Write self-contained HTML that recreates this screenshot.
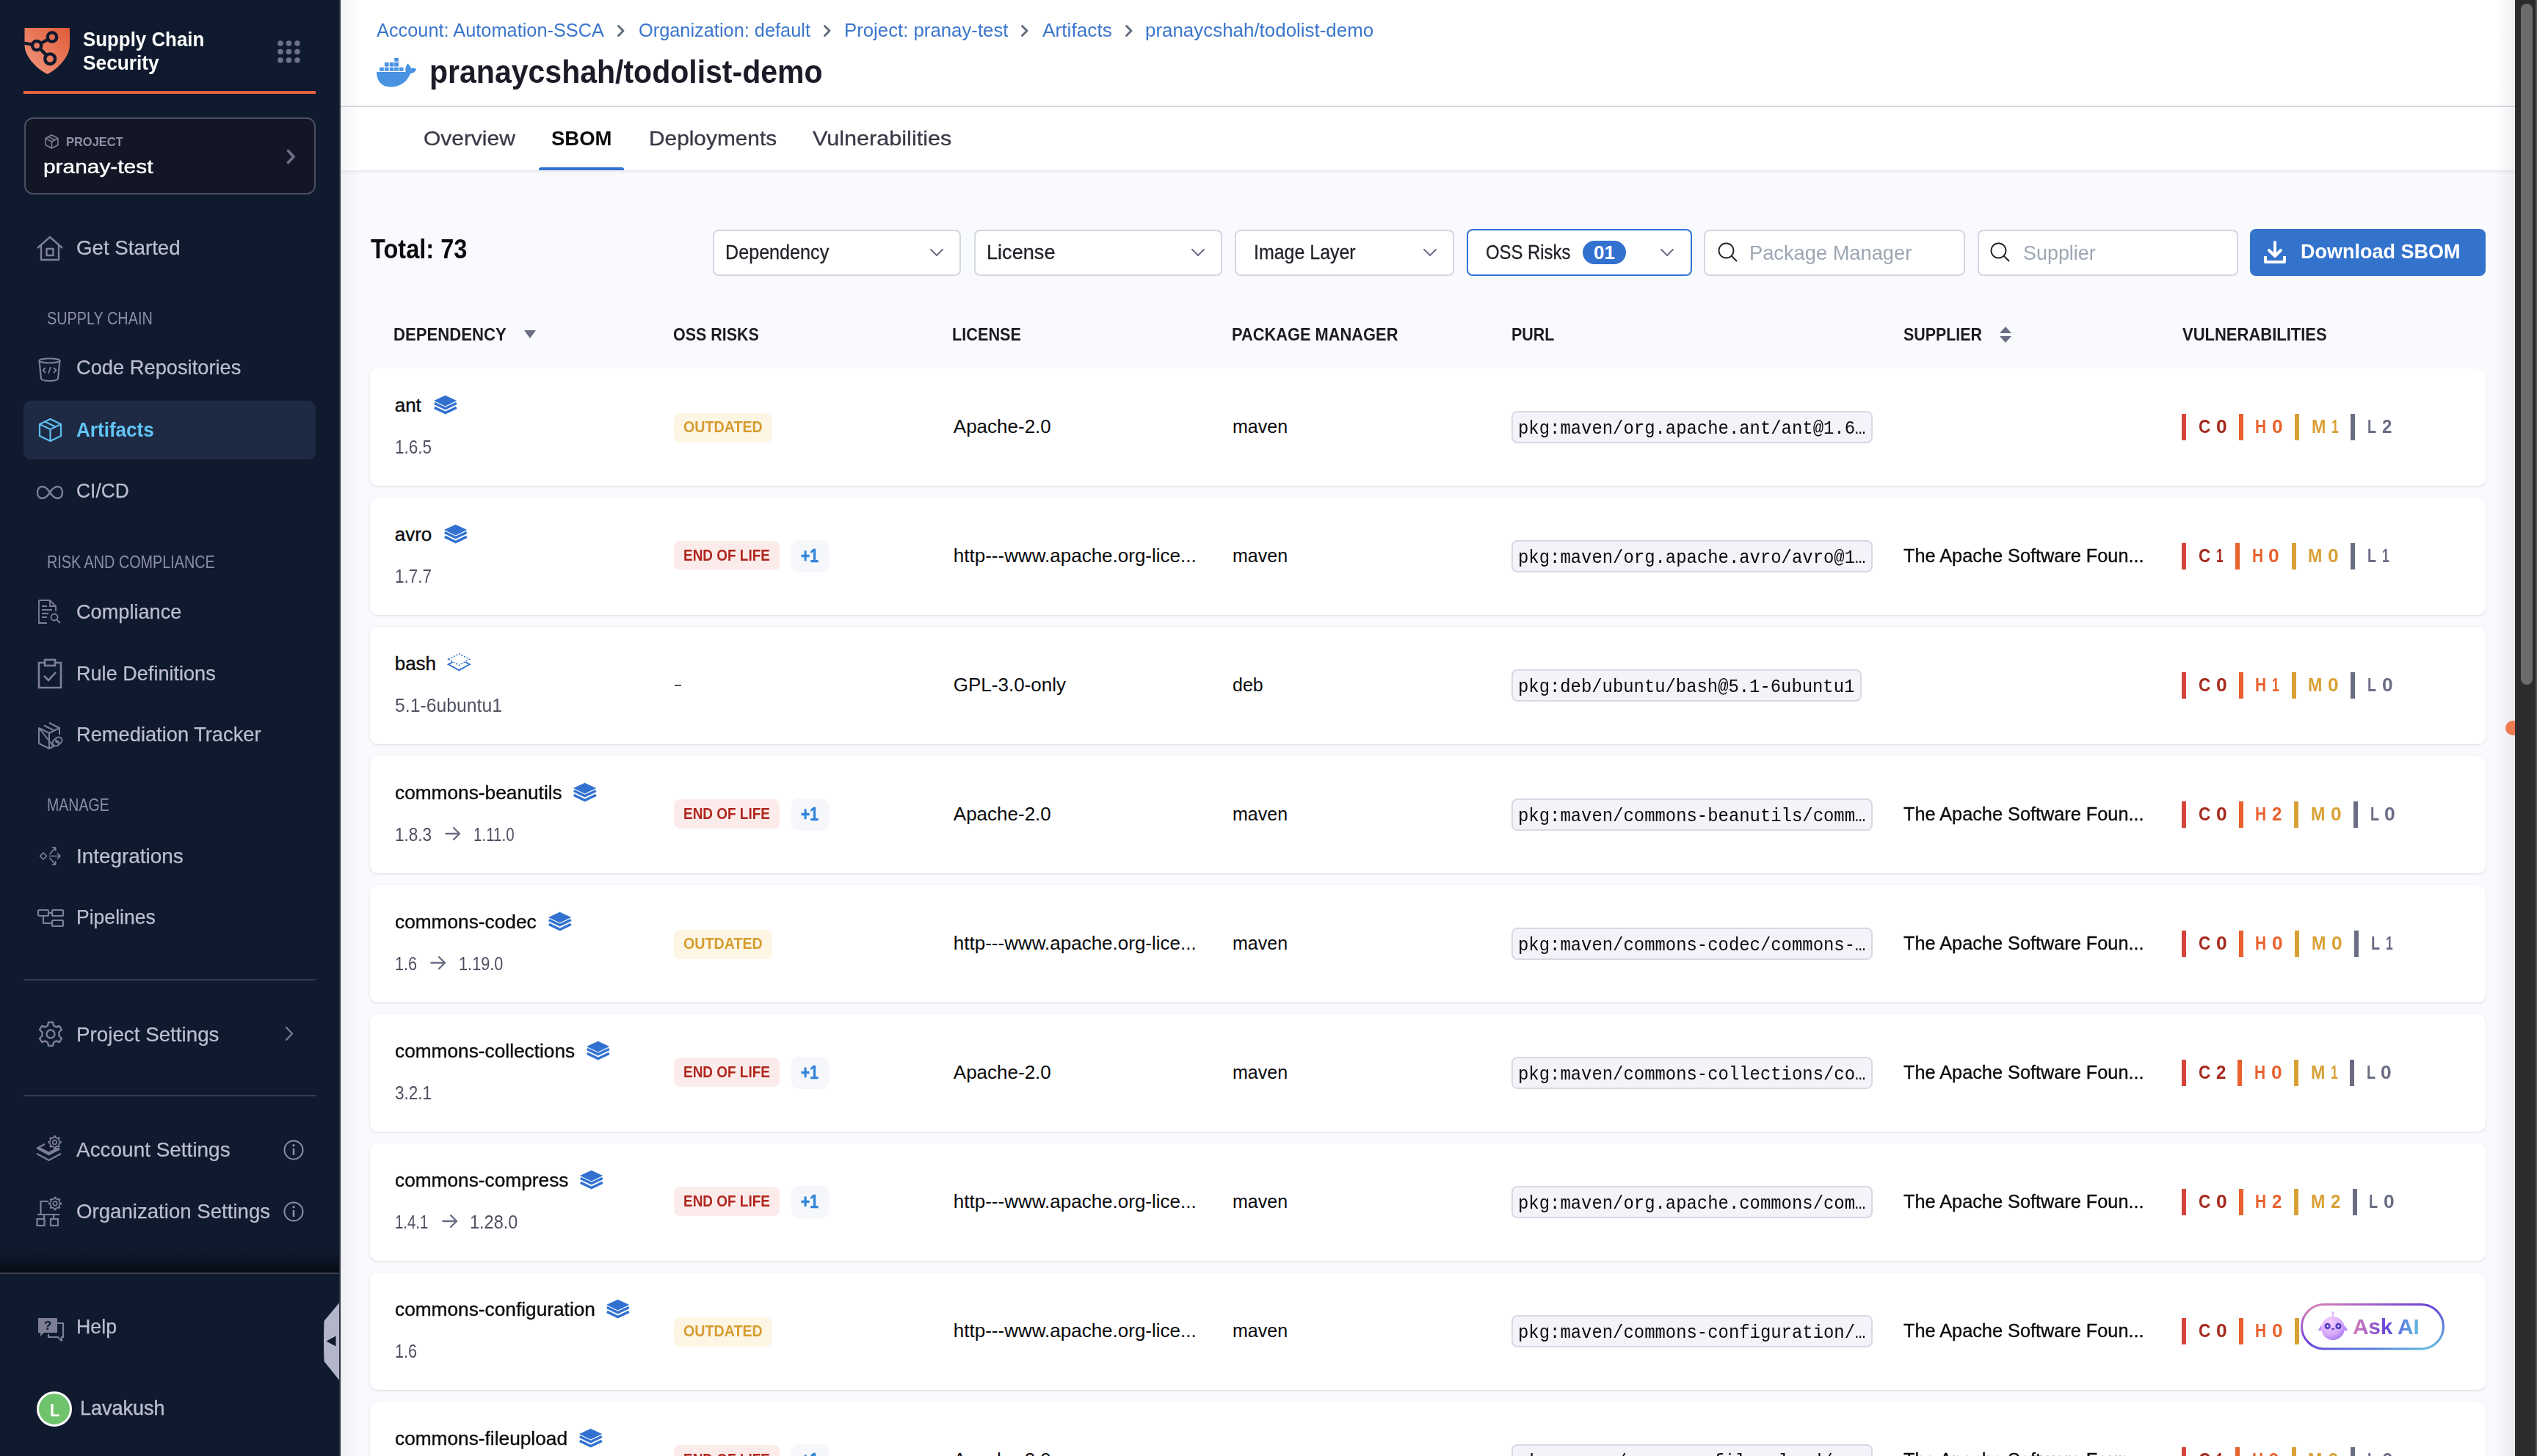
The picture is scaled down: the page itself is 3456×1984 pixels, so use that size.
<!DOCTYPE html>
<html><head><meta charset="utf-8"><style>
html,body{margin:0;padding:0;width:3456px;height:1984px;overflow:hidden;background:#f9fafd;}
.t{position:absolute;white-space:nowrap;}
.b{position:absolute;}
svg.b{overflow:visible;}
@media (max-width: 1800px) { html { zoom: 0.5; } }
</style></head><body>
<div class="b" style="left:0px;top:0px;width:464px;height:1984px;background:#0f1a2e;"></div><svg class="b" style="left:24px;top:30px;" width="80" height="80" viewBox="0 0 80 80">
<defs><linearGradient id="lg" x1="0" y1="1" x2="1" y2="0">
<stop offset="0" stop-color="#f29a80"/><stop offset="1" stop-color="#e05a38"/></linearGradient></defs>
<path d="M10 8 L70 8 Q71 8 71 9.5 L71 31 C71 47 56 63 40.5 71 C25 63 9.5 47 9.5 31 L9.5 9.5 Q9.5 8 10 8 Z" fill="url(#lg)"/>
<g fill="none" stroke="#0f1a2e" stroke-width="4.4">
<circle cx="47" cy="20.6" r="6.2"/><circle cx="26.1" cy="32.1" r="6.1"/><circle cx="44.2" cy="50.3" r="6.9"/>
<path d="M31.5 29.2 L41.5 23.6 M30.6 36.4 L39.4 45.4 M8 28.6 L20 30.6"/></g>
</svg><div class="t " style="left:112.5px;top:35.8px;font:700 28px/36px 'Liberation Sans', sans-serif;color:#ffffff;transform:scaleX(0.9240);transform-origin:0 0;">Supply Chain</div><div class="t " style="left:112.5px;top:67.5px;font:700 28px/36px 'Liberation Sans', sans-serif;color:#ffffff;transform:scaleX(0.9387);transform-origin:0 0;">Security</div><svg class="b" style="left:378px;top:55px;" width="32" height="32" viewBox="0 0 32 32"><circle cx="4.0" cy="4.0" r="3.8" fill="#6f7189"/><circle cx="4.0" cy="15.5" r="3.8" fill="#6f7189"/><circle cx="4.0" cy="27.0" r="3.8" fill="#6f7189"/><circle cx="15.5" cy="4.0" r="3.8" fill="#6f7189"/><circle cx="15.5" cy="15.5" r="3.8" fill="#6f7189"/><circle cx="15.5" cy="27.0" r="3.8" fill="#6f7189"/><circle cx="27.0" cy="4.0" r="3.8" fill="#6f7189"/><circle cx="27.0" cy="15.5" r="3.8" fill="#6f7189"/><circle cx="27.0" cy="27.0" r="3.8" fill="#6f7189"/></svg><div class="b" style="left:32px;top:124px;width:398px;height:4px;background:#e5613f;"></div><div class="b" style="left:33px;top:160px;width:397px;height:105px;background:#131725;border:2px solid #4b4e63;border-radius:12px;box-sizing:border-box;"></div><svg class="b" style="left:60px;top:182px;" width="22" height="22" viewBox="0 0 22 22"><g fill="none" stroke="#7e8097" stroke-width="1.6" stroke-linejoin="round"><path d="M10.5 2 L19 6.5 L19 15.5 L10.5 20 L2 15.5 L2 6.5 Z M2 6.5 L10.5 11 L19 6.5 M10.5 11 L10.5 20 M6 4.3 L14.5 8.8"/></g></svg><div class="t " style="left:90.4px;top:182.6px;font:700 17px/22px 'Liberation Sans', sans-serif;color:#8f91a8;transform:scaleX(0.9679);transform-origin:0 0;">PROJECT</div><div class="t " style="left:58.7px;top:209.6px;font:400 26px/34px 'Liberation Sans', sans-serif;color:#ffffff;transform:scaleX(1.1489);transform-origin:0 0;-webkit-text-stroke:0.4px currentColor;">pranay-test</div><svg class="b" style="left:388px;top:202px;" width="16" height="24" viewBox="0 0 16 24"><path d="M4.5 3.5 L12 11.5 L4.5 19.5" fill="none" stroke="#6f7189" stroke-width="3.6" stroke-linecap="round" stroke-linejoin="round"/></svg><svg class="b" style="left:49px;top:321px;" width="40" height="36" viewBox="0 0 40 36"><g fill="none" stroke="#7d7f96" stroke-width="2.4" stroke-linejoin="round"><path d="M2 17 L19 2 L36 17 M7 13 L7 33 L31 33 L31 13"/><rect x="14.5" y="18" width="9" height="9"/></g></svg><div class="t " style="left:104.3px;top:320.3px;font:400 28px/36px 'Liberation Sans', sans-serif;color:#bcbed1;transform:scaleX(0.9895);transform-origin:0 0;-webkit-text-stroke:0.25px currentColor;">Get Started</div><div class="t " style="left:64.3px;top:419.0px;font:400 23px/30px 'Liberation Sans', sans-serif;color:#8c8ea5;transform:scaleX(0.8629);transform-origin:0 0;">SUPPLY CHAIN</div><svg class="b" style="left:51px;top:487px;" width="34" height="34" viewBox="0 0 34 34"><g fill="none" stroke="#7d7f96" stroke-width="2.2"><ellipse cx="16.5" cy="4.5" rx="14" ry="3"/><path d="M2.5 4.5 L5 29 Q6 32 16.5 32 Q27 32 28 29 L30.5 4.5"/><path d="M11 14 L7.5 17.5 L11 21 M22 14 L25.5 17.5 L22 21 M18 13 L15 22" stroke-width="1.8"/></g></svg><div class="t " style="left:104.3px;top:483.3px;font:400 28px/36px 'Liberation Sans', sans-serif;color:#bcbed1;transform:scaleX(0.9739);transform-origin:0 0;-webkit-text-stroke:0.25px currentColor;">Code Repositories</div><div class="b" style="left:32px;top:546px;width:398px;height:80px;background:#1e2a43;border-radius:10px;"></div><svg class="b" style="left:52px;top:569px;" width="34" height="34" viewBox="0 0 34 34"><g fill="none" stroke="#5cbdf0" stroke-width="2.2" stroke-linejoin="round"><path d="M16.5 2 L31 9 L31 25 L16.5 32 L2 25 L2 9 Z M2 9 L16.5 16 L31 9 M16.5 16 L16.5 32 M9 5.5 L23.5 12.5"/></g></svg><div class="t " style="left:104.3px;top:568.3px;font:700 28px/36px 'Liberation Sans', sans-serif;color:#60c4f5;transform:scaleX(0.9316);transform-origin:0 0;">Artifacts</div><svg class="b" style="left:49px;top:661px;" width="38" height="20" viewBox="0 0 38 20"><path d="M19 10 C15.5 4.5, 12 2, 8.5 2 C4.5 2, 2 5.5, 2 10 C2 14.5, 4.5 18, 8.5 18 C12 18, 15.5 15.5, 19 10 C22.5 4.5, 26 2, 29.5 2 C33.5 2, 36 5.5, 36 10 C36 14.5, 33.5 18, 29.5 18 C26 18, 22.5 15.5, 19 10 Z" fill="none" stroke="#7d7f96" stroke-width="2.4"/></svg><div class="t " style="left:104.3px;top:651.3px;font:400 28px/36px 'Liberation Sans', sans-serif;color:#bcbed1;transform:scaleX(0.9421);transform-origin:0 0;-webkit-text-stroke:0.25px currentColor;">CI/CD</div><div class="t " style="left:64.3px;top:751.0px;font:400 23px/30px 'Liberation Sans', sans-serif;color:#8c8ea5;transform:scaleX(0.8605);transform-origin:0 0;">RISK AND COMPLIANCE</div><svg class="b" style="left:51px;top:816px;" width="34" height="36" viewBox="0 0 34 36"><g fill="none" stroke="#7d7f96" stroke-width="1.8"><path d="M2 2 L17 2 L25 10 L25 17 M13 33 L2 33 L2 2 M17 2 L17 10 L25 10"/><path d="M6 10 L13 10 M6 15 L20 15 M6 20 L15 20 M6 25 L13 25"/><circle cx="23" cy="25" r="4.5"/><path d="M26.5 28.5 L31 33"/></g></svg><div class="t " style="left:104.3px;top:816.3px;font:400 28px/36px 'Liberation Sans', sans-serif;color:#bcbed1;transform:scaleX(0.9696);transform-origin:0 0;-webkit-text-stroke:0.25px currentColor;">Compliance</div><svg class="b" style="left:51px;top:897px;" width="34" height="42" viewBox="0 0 34 42"><g fill="none" stroke="#7d7f96" stroke-width="2.6"><path d="M10 6 L2 6 L2 40 L32 40 L32 6 L24 6"/><rect x="10" y="2" width="14" height="8"/><path d="M9 24 L15 30 L25 19"/></g></svg><div class="t " style="left:104.3px;top:900.3px;font:400 28px/36px 'Liberation Sans', sans-serif;color:#bcbed1;transform:scaleX(0.9673);transform-origin:0 0;-webkit-text-stroke:0.25px currentColor;">Rule Definitions</div><svg class="b" style="left:51px;top:983px;" width="36" height="38" viewBox="0 0 36 38"><g fill="none" stroke="#7d7f96" stroke-width="2" stroke-linejoin="round"><path d="M16 2 L30 9 L30 18 M22 34 L16 37 L2 30 L2 9 Z M2 9 L16 16 L30 9 M16 16 L16 37 M9 5.5 L23 12.5"/><rect x="20" y="23" width="14" height="9" rx="4.5" transform="rotate(-40 27 27.5)"/><circle cx="26" cy="27" r="1" fill="#7d7f96"/><circle cx="28" cy="28.5" r="1" fill="#7d7f96"/></g></svg><div class="t " style="left:104.3px;top:983.3px;font:400 28px/36px 'Liberation Sans', sans-serif;color:#bcbed1;transform:scaleX(0.9736);transform-origin:0 0;-webkit-text-stroke:0.25px currentColor;">Remediation Tracker</div><div class="t " style="left:64.3px;top:1082.0px;font:400 23px/30px 'Liberation Sans', sans-serif;color:#8c8ea5;transform:scaleX(0.8500);transform-origin:0 0;">MANAGE</div><svg class="b" style="left:53px;top:1151px;" width="32" height="32" viewBox="0 0 32 32"><g fill="none" stroke="#7d7f96" stroke-width="1.7" stroke-linecap="round" stroke-linejoin="round"><path d="M1.5 15.5 L6 11 L10.5 15.5 L6 20 Z"/><path d="M14.5 15.5 L29 15.5 M25.5 12 L29 15.5 L25.5 19 M15 12.5 L22.5 4 M18.5 3.5 L22.5 4 L22.8 8 M15 18.5 L22.5 27 M18.5 27.5 L22.5 27 L22.8 23"/></g></svg><div class="t " style="left:104.3px;top:1149.3px;font:400 28px/36px 'Liberation Sans', sans-serif;color:#bcbed1;transform:scaleX(0.9959);transform-origin:0 0;-webkit-text-stroke:0.25px currentColor;">Integrations</div><svg class="b" style="left:50px;top:1238px;" width="38" height="26" viewBox="0 0 38 26"><g fill="none" stroke="#7d7f96" stroke-width="2.2"><rect x="2" y="2" width="14" height="8" rx="1.5"/><rect x="21" y="2" width="15" height="8" rx="1.5"/><rect x="21" y="16" width="15" height="8" rx="1.5"/><path d="M9 10 L9 20 L21 20 M16 6 L21 6"/></g></svg><div class="t " style="left:104.3px;top:1232.3px;font:400 28px/36px 'Liberation Sans', sans-serif;color:#bcbed1;transform:scaleX(0.9482);transform-origin:0 0;-webkit-text-stroke:0.25px currentColor;">Pipelines</div><div class="b" style="left:32px;top:1334px;width:398px;height:2px;background:#363b50;"></div><svg class="b" style="left:51px;top:1391px;" width="36" height="36" viewBox="0 0 36 36"><g fill="none" stroke="#7d7f96" stroke-width="2.4" stroke-linejoin="round"><path d="M15 2 L21 2 L22 6.5 L25.5 8.5 L30 7 L33 12 L29.5 15.5 L29.5 20.5 L33 24 L30 29 L25.5 27.5 L22 29.5 L21 34 L15 34 L14 29.5 L10.5 27.5 L6 29 L3 24 L6.5 20.5 L6.5 15.5 L3 12 L6 7 L10.5 8.5 L14 6.5 Z"/><circle cx="18" cy="18" r="5.5"/></g></svg><div class="t " style="left:104.3px;top:1392.3px;font:400 28px/36px 'Liberation Sans', sans-serif;color:#bcbed1;transform:scaleX(0.9918);transform-origin:0 0;-webkit-text-stroke:0.25px currentColor;">Project Settings</div><svg class="b" style="left:386px;top:1398px;" width="16" height="22" viewBox="0 0 16 22"><path d="M4 2 L12 10.5 L4 19" fill="none" stroke="#7d7f96" stroke-width="2.2" stroke-linecap="round" stroke-linejoin="round"/></svg><div class="b" style="left:32px;top:1492px;width:398px;height:2px;background:#363b50;"></div><svg class="b" style="left:48px;top:1546px;" width="40" height="42" viewBox="0 0 40 42"><g fill="none" stroke="#7d7f96" stroke-width="2" stroke-linejoin="round"><path d="M33.02,9.47 L34.87,9.84 L34.87,11.16 L33.02,11.53 L31.84,14.38 L32.89,15.96 L31.96,16.89 L30.38,15.84 L27.53,17.02 L27.16,18.87 L25.84,18.87 L25.47,17.02 L22.62,15.84 L21.04,16.89 L20.11,15.96 L21.16,14.38 L19.98,11.53 L18.13,11.16 L18.13,9.84 L19.98,9.47 L21.16,6.62 L20.11,5.04 L21.04,4.11 L22.62,5.16 L25.47,3.98 L25.84,2.13 L27.16,2.13 L27.53,3.98 L30.38,5.16 L31.96,4.11 L32.89,5.04 L31.84,6.62 Z" stroke-width="1.7"/><circle cx="26.5" cy="10.5" r="2.8" stroke-width="1.7"/><path d="M13 13 L2 19"/><path d="M2 26 L18.5 35 L35 26"/></g><path d="M2 19.5 L18.5 28.5 L35 20 L30 17.5 L18.5 23.5 L6 17 Z" fill="#7d7f96"/></svg><div class="t " style="left:104.3px;top:1549.3px;font:400 28px/36px 'Liberation Sans', sans-serif;color:#bcbed1;transform:scaleX(0.9976);transform-origin:0 0;-webkit-text-stroke:0.25px currentColor;">Account Settings</div><svg class="b" style="left:385px;top:1552px;" width="30" height="30" viewBox="0 0 30 30"><g fill="none" stroke="#8c8ea5" stroke-width="2"><circle cx="15" cy="15" r="12.5"/><path d="M15 13 L15 22" stroke-width="2.6"/></g><circle cx="15" cy="8.8" r="1.7" fill="#8c8ea5"/></svg><svg class="b" style="left:48px;top:1630px;" width="40" height="42" viewBox="0 0 40 42"><g fill="none" stroke="#7d7f96" stroke-width="2.2"><path d="M33.52,8.97 L35.37,9.34 L35.37,10.66 L33.52,11.03 L32.34,13.88 L33.39,15.46 L32.46,16.39 L30.88,15.34 L28.03,16.52 L27.66,18.37 L26.34,18.37 L25.97,16.52 L23.12,15.34 L21.54,16.39 L20.61,15.46 L21.66,13.88 L20.48,11.03 L18.63,10.66 L18.63,9.34 L20.48,8.97 L21.66,6.12 L20.61,4.54 L21.54,3.61 L23.12,4.66 L25.97,3.48 L26.34,1.63 L27.66,1.63 L28.03,3.48 L30.88,4.66 L32.46,3.61 L33.39,4.54 L32.34,6.12 Z" stroke-width="1.7"/><circle cx="27" cy="10" r="2.8" stroke-width="1.7"/><path d="M18 7 L7.5 7 L7.5 19 M7.5 19 L7.5 25 M3 25 L33 25 M12 25 L12 31 M25 25 L25 31"/><rect x="2.5" y="31" width="10" height="9"/><rect x="21" y="31" width="10" height="9"/></g></svg><div class="t " style="left:104.3px;top:1633.3px;font:400 28px/36px 'Liberation Sans', sans-serif;color:#bcbed1;transform:scaleX(0.9866);transform-origin:0 0;-webkit-text-stroke:0.25px currentColor;">Organization Settings</div><svg class="b" style="left:385px;top:1636px;" width="30" height="30" viewBox="0 0 30 30"><g fill="none" stroke="#8c8ea5" stroke-width="2"><circle cx="15" cy="15" r="12.5"/><path d="M15 13 L15 22" stroke-width="2.6"/></g><circle cx="15" cy="8.8" r="1.7" fill="#8c8ea5"/></svg><div class="b" style="left:0px;top:1706px;width:462px;height:28px;background:linear-gradient(to bottom, rgba(5,8,15,0) 0%, rgba(5,8,15,0.35) 50%, rgba(5,8,15,0.85) 100%);"></div><div class="b" style="left:0px;top:1734px;width:462px;height:2px;background:#3d404f;"></div><svg class="b" style="left:50px;top:1794px;" width="40" height="36" viewBox="0 0 40 36"><g fill="none" stroke="#7d7f96" stroke-width="2.2" stroke-linejoin="round"><path d="M10 9 L36 9 L36 28 L34 28 L34 33 L29 28 L16 28 L16 24"/></g><path d="M2 2 L28 2 L28 22 L10 22 L5 27 L5 22 L2 22 Z" fill="#7d7f96"/><text x="15" y="18" font-family="Liberation Sans" font-weight="700" font-size="17" fill="#0f1a2e" text-anchor="middle">?</text></svg><div class="t " style="left:104.3px;top:1790.3px;font:400 28px/36px 'Liberation Sans', sans-serif;color:#bcbed1;transform:scaleX(0.9552);transform-origin:0 0;-webkit-text-stroke:0.25px currentColor;">Help</div><div class="b" style="left:50px;top:1896px;width:48px;height:48px;border-radius:50%;background:#6fc36c;border:3px solid #ffffff;box-sizing:border-box;"></div><div class="t " style="left:67.5px;top:1907.0px;font:700 23px/30px 'Liberation Sans', sans-serif;color:#ffffff;transform:scaleX(0.9286);transform-origin:0 0;">L</div><div class="t " style="left:109.0px;top:1901.3px;font:400 28px/36px 'Liberation Sans', sans-serif;color:#b9bbcf;transform:scaleX(0.9625);transform-origin:0 0;-webkit-text-stroke:0.5px currentColor;">Lavakush</div><svg class="b" style="left:440px;top:1772px;" width="24" height="112" viewBox="0 0 24 112"><path d="M24 1 L24 111 L1.5 83 Q0.5 55 1.5 28 Z" fill="#b3b5ca"/><path d="M4.5 55.6 L17.5 48.6 L17.5 62.6 Z" fill="#0f1a2e"/></svg><div class="b" style="left:462px;top:0px;width:2px;height:1984px;background:#2f3340;"></div><div class="b" style="left:464px;top:0px;width:2962px;height:144px;background:#ffffff;"></div><div class="b" style="left:464px;top:144px;width:2962px;height:2px;background:#d9dae6;"></div><div class="b" style="left:464px;top:146px;width:2962px;height:86px;background:#ffffff;box-shadow:0 2px 4px rgba(96,97,112,0.12);"></div><div class="t " style="left:513.0px;top:24.0px;font:400 26px/34px 'Liberation Sans', sans-serif;color:#3b76cc;transform:scaleX(0.9749);transform-origin:0 0;">Account: Automation-SSCA</div><svg class="b" style="left:839px;top:33px;" width="14" height="18" viewBox="0 0 14 18"><path d="M3.5 2.5 L10 9 L3.5 15.5" fill="none" stroke="#5f6b7b" stroke-width="2.9" stroke-linecap="round" stroke-linejoin="round"/></svg><div class="t " style="left:870.0px;top:24.0px;font:400 26px/34px 'Liberation Sans', sans-serif;color:#3b76cc;transform:scaleX(0.9751);transform-origin:0 0;">Organization: default</div><svg class="b" style="left:1120px;top:33px;" width="14" height="18" viewBox="0 0 14 18"><path d="M3.5 2.5 L10 9 L3.5 15.5" fill="none" stroke="#5f6b7b" stroke-width="2.9" stroke-linecap="round" stroke-linejoin="round"/></svg><div class="t " style="left:1150.0px;top:24.0px;font:400 26px/34px 'Liberation Sans', sans-serif;color:#3b76cc;transform:scaleX(0.9912);transform-origin:0 0;">Project: pranay-test</div><svg class="b" style="left:1389px;top:33px;" width="14" height="18" viewBox="0 0 14 18"><path d="M3.5 2.5 L10 9 L3.5 15.5" fill="none" stroke="#5f6b7b" stroke-width="2.9" stroke-linecap="round" stroke-linejoin="round"/></svg><div class="t " style="left:1420.0px;top:24.0px;font:400 26px/34px 'Liberation Sans', sans-serif;color:#3b76cc;transform:scaleX(1.0106);transform-origin:0 0;">Artifacts</div><svg class="b" style="left:1531px;top:33px;" width="14" height="18" viewBox="0 0 14 18"><path d="M3.5 2.5 L10 9 L3.5 15.5" fill="none" stroke="#5f6b7b" stroke-width="2.9" stroke-linecap="round" stroke-linejoin="round"/></svg><div class="t " style="left:1560.0px;top:24.0px;font:400 26px/34px 'Liberation Sans', sans-serif;color:#3b76cc;transform:scaleX(0.9968);transform-origin:0 0;">pranaycshah/todolist-demo</div><svg class="b" style="left:505px;top:70px;" width="70" height="55" viewBox="0 0 70 55"><g fill="#4a93e3">
<path d="M8 28 L47.6 28 C46.6 24 47.8 19.5 50.4 16.6 C52.6 18.6 54.5 21 55 23.2 C57.6 22.2 60.8 22.8 62.2 24.6 C60.6 28.4 57.4 30.2 54.4 29.9 C49 42 40 48.4 27 48.4 C14.5 48.4 8 40 8 28 Z"/>
<rect x="12.1" y="21.9" width="5.7" height="4.9"/><rect x="18.9" y="21.9" width="5.7" height="4.9"/><rect x="25.8" y="21.9" width="5.7" height="4.9"/><rect x="32.2" y="21.9" width="5.7" height="4.9"/><rect x="38.9" y="21.9" width="5.7" height="4.9"/>
<rect x="18.9" y="15.1" width="5.7" height="5.5"/><rect x="25.8" y="15.1" width="5.7" height="5.5"/><rect x="32.2" y="15.1" width="5.7" height="5.5"/>
<rect x="32.2" y="9" width="5.7" height="4.8"/></g></svg><div class="t " style="left:585.0px;top:68.8px;font:700 44px/57px 'Liberation Sans', sans-serif;color:#1c1c28;transform:scaleX(0.9322);transform-origin:0 0;">pranaycshah/todolist-demo</div><div class="t " style="left:576.6px;top:171.0px;font:400 28px/36px 'Liberation Sans', sans-serif;color:#383946;transform:scaleX(1.0692);transform-origin:0 0;-webkit-text-stroke:0.3px currentColor;">Overview</div><div class="t " style="left:751.0px;top:171.0px;font:700 28px/36px 'Liberation Sans', sans-serif;color:#0b0b0d;transform:scaleX(0.9821);transform-origin:0 0;">SBOM</div><div class="t " style="left:884.0px;top:171.0px;font:400 28px/36px 'Liberation Sans', sans-serif;color:#383946;transform:scaleX(1.0656);transform-origin:0 0;-webkit-text-stroke:0.3px currentColor;">Deployments</div><div class="t " style="left:1107.0px;top:171.0px;font:400 28px/36px 'Liberation Sans', sans-serif;color:#383946;transform:scaleX(1.0925);transform-origin:0 0;-webkit-text-stroke:0.3px currentColor;">Vulnerabilities</div><div class="b" style="left:734px;top:228px;width:116px;height:4px;background:#3271d2;border-radius:3px 3px 0 0;"></div><div class="b" style="left:3426px;top:0px;width:30px;height:1984px;background:#2c2c2c;"></div><div class="b" style="left:3454px;top:0px;width:2px;height:1984px;background:#555555;"></div><div class="b" style="left:3427px;top:0px;width:1px;height:1984px;background:#3a3a3a;"></div><div class="b" style="left:3434px;top:5px;width:16px;height:928px;background:#6b6b6b;border-radius:8px;"></div><div class="t " style="left:505.0px;top:316.3px;font:700 36px/47px 'Liberation Sans', sans-serif;color:#0b0b0d;transform:scaleX(0.9034);transform-origin:0 0;">Total: 73</div><div class="b" style="left:971px;top:313px;width:338px;height:63px;background:#ffffff;border:2px solid #d4d6e1;border-radius:8px;box-sizing:border-box;"></div><div class="t " style="left:988.0px;top:325.6px;font:400 28px/36px 'Liberation Sans', sans-serif;color:#22222a;transform:scaleX(0.8981);transform-origin:0 0;-webkit-text-stroke:0.3px currentColor;">Dependency</div><svg class="b" style="left:1266px;top:338px;" width="20" height="12" viewBox="0 0 20 12"><path d="M2 2 L10 10 L18 2" fill="none" stroke="#6b6d85" stroke-width="2" stroke-linecap="round" stroke-linejoin="round"/></svg><div class="b" style="left:1327px;top:313px;width:338px;height:63px;background:#ffffff;border:2px solid #d4d6e1;border-radius:8px;box-sizing:border-box;"></div><div class="t " style="left:1344.0px;top:325.6px;font:400 28px/36px 'Liberation Sans', sans-serif;color:#22222a;transform:scaleX(0.9691);transform-origin:0 0;-webkit-text-stroke:0.3px currentColor;">License</div><svg class="b" style="left:1622px;top:338px;" width="20" height="12" viewBox="0 0 20 12"><path d="M2 2 L10 10 L18 2" fill="none" stroke="#6b6d85" stroke-width="2" stroke-linecap="round" stroke-linejoin="round"/></svg><div class="b" style="left:1682px;top:313px;width:299px;height:63px;background:#ffffff;border:2px solid #d4d6e1;border-radius:8px;box-sizing:border-box;"></div><div class="t " style="left:1708.0px;top:325.6px;font:400 28px/36px 'Liberation Sans', sans-serif;color:#22222a;transform:scaleX(0.8910);transform-origin:0 0;-webkit-text-stroke:0.3px currentColor;">Image Layer</div><svg class="b" style="left:1938px;top:338px;" width="20" height="12" viewBox="0 0 20 12"><path d="M2 2 L10 10 L18 2" fill="none" stroke="#6b6d85" stroke-width="2" stroke-linecap="round" stroke-linejoin="round"/></svg><div class="b" style="left:1998px;top:312px;width:307px;height:64px;background:#ffffff;border:2.5px solid #3271d0;border-radius:8px;box-sizing:border-box;"></div><div class="t " style="left:2024.0px;top:325.6px;font:400 28px/36px 'Liberation Sans', sans-serif;color:#22222a;transform:scaleX(0.8519);transform-origin:0 0;-webkit-text-stroke:0.3px currentColor;">OSS Risks</div><div class="b" style="left:2156px;top:328px;width:59px;height:32px;background:#3271d0;border-radius:16px;"></div><div class="t " style="left:2171.0px;top:327.0px;font:700 26px/34px 'Liberation Sans', sans-serif;color:#ffffff;transform:scaleX(1.0000);transform-origin:0 0;">01</div><svg class="b" style="left:2261px;top:338px;" width="20" height="12" viewBox="0 0 20 12"><path d="M2 2 L10 10 L18 2" fill="none" stroke="#6b6d85" stroke-width="2" stroke-linecap="round" stroke-linejoin="round"/></svg><div class="b" style="left:2321px;top:313px;width:356px;height:63px;background:#ffffff;border:2px solid #d4d6e1;border-radius:8px;box-sizing:border-box;"></div><svg class="b" style="left:2340px;top:330px;" width="28" height="28" viewBox="0 0 28 28"><g fill="none" stroke="#22222a" stroke-width="1.9" stroke-linecap="round"><circle cx="11.5" cy="11.5" r="10"/><path d="M19 19 L25.5 25.5"/></g></svg><div class="t " style="left:2383.0px;top:326.8px;font:400 28px/36px 'Liberation Sans', sans-serif;color:#9da6b3;transform:scaleX(0.9736);transform-origin:0 0;">Package Manager</div><div class="b" style="left:2694px;top:313px;width:355px;height:63px;background:#ffffff;border:2px solid #d4d6e1;border-radius:8px;box-sizing:border-box;"></div><svg class="b" style="left:2711px;top:330px;" width="28" height="28" viewBox="0 0 28 28"><g fill="none" stroke="#22222a" stroke-width="1.9" stroke-linecap="round"><circle cx="11.5" cy="11.5" r="10"/><path d="M19 19 L25.5 25.5"/></g></svg><div class="t " style="left:2755.5px;top:326.8px;font:400 28px/36px 'Liberation Sans', sans-serif;color:#9da6b3;transform:scaleX(0.9612);transform-origin:0 0;">Supplier</div><div class="b" style="left:3065px;top:312px;width:321px;height:64px;background:#3473cc;border-radius:8px;"></div><svg class="b" style="left:3083px;top:327px;" width="34" height="34" viewBox="0 0 34 34"><g fill="none" stroke="#ffffff" stroke-width="4" stroke-linecap="round" stroke-linejoin="round"><path d="M16 3 L16 21 M8 14 L16 22 L24 14"/><path d="M3 22 L3 30 L29 30 L29 22" stroke-linecap="butt"/></g></svg><div class="t " style="left:3134.0px;top:325.3px;font:700 28px/36px 'Liberation Sans', sans-serif;color:#ffffff;transform:scaleX(0.9646);transform-origin:0 0;">Download SBOM</div><div class="t " style="left:536.0px;top:439.5px;font:700 24px/31px 'Liberation Sans', sans-serif;color:#1b1b22;transform:scaleX(0.9222);transform-origin:0 0;">DEPENDENCY</div><svg class="b" style="left:713px;top:449px;" width="18" height="14" viewBox="0 0 18 14"><path d="M1 1 L17 1 L9 12 Z" fill="#6b6d85"/></svg><div class="t " style="left:917.0px;top:439.5px;font:700 24px/31px 'Liberation Sans', sans-serif;color:#1b1b22;transform:scaleX(0.8931);transform-origin:0 0;">OSS RISKS</div><div class="t " style="left:1297.0px;top:439.5px;font:700 24px/31px 'Liberation Sans', sans-serif;color:#1b1b22;transform:scaleX(0.9038);transform-origin:0 0;">LICENSE</div><div class="t " style="left:1678.0px;top:439.5px;font:700 24px/31px 'Liberation Sans', sans-serif;color:#1b1b22;transform:scaleX(0.9096);transform-origin:0 0;">PACKAGE MANAGER</div><div class="t " style="left:2059.0px;top:439.5px;font:700 24px/31px 'Liberation Sans', sans-serif;color:#1b1b22;transform:scaleX(0.8923);transform-origin:0 0;">PURL</div><div class="t " style="left:2593.0px;top:439.5px;font:700 24px/31px 'Liberation Sans', sans-serif;color:#1b1b22;transform:scaleX(0.8917);transform-origin:0 0;">SUPPLIER</div><svg class="b" style="left:2723px;top:444px;" width="18" height="24" viewBox="0 0 18 24"><path d="M9 1 L17 10 L1 10 Z M9 23 L17 14 L1 14 Z" fill="#6b6d85"/></svg><div class="t " style="left:2973.0px;top:439.5px;font:700 24px/31px 'Liberation Sans', sans-serif;color:#1b1b22;transform:scaleX(0.9163);transform-origin:0 0;">VULNERABILITIES</div><div class="b" style="left:504px;top:502px;width:2882px;height:160px;background:#ffffff;border-radius:10px;box-shadow:0 1px 3px rgba(96,97,112,0.18), 0 0 1px rgba(40,41,61,0.06);"></div><div class="t " style="left:537.7px;top:535.0px;font:400 26px/34px 'Liberation Sans', sans-serif;color:#0b0b0d;transform:scaleX(1.0000);transform-origin:0 0;-webkit-text-stroke:0.35px currentColor;">ant</div><svg class="b" style="left:591px;top:538px;" width="32" height="28" viewBox="0 0 32 28"><g fill="#3271d0"><path d="M0 8 L15.6 0.8 L31.2 8 L15.6 15.4 Z"/></g>
<g fill="none" stroke="#3271d0" stroke-width="3.5" stroke-linejoin="miter"><path d="M0.8 11.5 L15.7 18.6 L30.8 11.5"/><path d="M0.8 17.4 L15.7 24.5 L30.8 17.4"/></g></svg><div class="t " style="left:537.7px;top:592.0px;font:400 26px/34px 'Liberation Sans', sans-serif;color:#4f5162;transform:scaleX(0.8672);transform-origin:0 0;">1.6.5</div><div class="b" style="left:918px;top:563px;width:134px;height:40px;background:#fdf6e5;border-radius:8px;"></div><div class="t " style="left:931.0px;top:566.9px;font:700 22px/29px 'Liberation Sans', sans-serif;color:#d69c2f;transform:scaleX(0.8942);transform-origin:0 0;">OUTDATED</div><div class="t " style="left:1298.8px;top:564.0px;font:400 26px/34px 'Liberation Sans', sans-serif;color:#0b0b0d;">Apache-2.0</div><div class="t " style="left:1679.0px;top:565.3px;font:400 25px/32px 'Liberation Sans', sans-serif;color:#0b0b0d;">maven</div><div class="b" style="left:2059px;top:560px;width:492px;height:44px;background:#f3f4f9;border:2px solid #d8d9e4;border-radius:8px;box-sizing:border-box;"></div><div class="t " style="left:2068.0px;top:567.1px;font:400 26px/34px 'Liberation Mono', monospace;color:#0b0b0d;transform:scaleX(0.9194);transform-origin:0 0;">pkg:maven/org.apache.ant/ant@1.6…</div><div class="b" style="left:2972px;top:564px;width:6px;height:36px;background:#d5433a;"></div><div class="t " style="left:2994.7px;top:564.3px;font:700 26px/34px 'Liberation Sans', sans-serif;color:#a52a1e;transform:scaleX(0.8632);transform-origin:0 0;">C</div><div class="t " style="left:3018.5px;top:564.3px;font:700 26px/34px 'Liberation Sans', sans-serif;color:#a52a1e;transform:scaleX(1.0143);transform-origin:0 0;">0</div><div class="b" style="left:3050px;top:564px;width:6px;height:36px;background:#e8622e;"></div><div class="t " style="left:3072.4px;top:564.3px;font:700 26px/34px 'Liberation Sans', sans-serif;color:#e8622e;transform:scaleX(0.8053);transform-origin:0 0;">H</div><div class="t " style="left:3095.1px;top:564.3px;font:700 26px/34px 'Liberation Sans', sans-serif;color:#e8622e;transform:scaleX(1.0143);transform-origin:0 0;">0</div><div class="b" style="left:3126px;top:564px;width:6px;height:36px;background:#d9a035;"></div><div class="t " style="left:3149.0px;top:564.3px;font:700 26px/34px 'Liberation Sans', sans-serif;color:#d9a035;transform:scaleX(0.8955);transform-origin:0 0;">M</div><div class="t " style="left:3176.1px;top:564.3px;font:700 26px/34px 'Liberation Sans', sans-serif;color:#d9a035;transform:scaleX(0.6714);transform-origin:0 0;">1</div><div class="b" style="left:3202px;top:564px;width:6px;height:36px;background:#6b6d85;"></div><div class="t " style="left:3225.2px;top:564.3px;font:700 26px/34px 'Liberation Sans', sans-serif;color:#6b6d85;transform:scaleX(0.7562);transform-origin:0 0;">L</div><div class="t " style="left:3244.7px;top:564.3px;font:700 26px/34px 'Liberation Sans', sans-serif;color:#6b6d85;transform:scaleX(0.9214);transform-origin:0 0;">2</div><div class="b" style="left:504px;top:678px;width:2882px;height:160px;background:#ffffff;border-radius:10px;box-shadow:0 1px 3px rgba(96,97,112,0.18), 0 0 1px rgba(40,41,61,0.06);"></div><div class="t " style="left:537.7px;top:711.0px;font:400 26px/34px 'Liberation Sans', sans-serif;color:#0b0b0d;transform:scaleX(1.0000);transform-origin:0 0;-webkit-text-stroke:0.35px currentColor;">avro</div><svg class="b" style="left:605px;top:714px;" width="32" height="28" viewBox="0 0 32 28"><g fill="#3271d0"><path d="M0 8 L15.6 0.8 L31.2 8 L15.6 15.4 Z"/></g>
<g fill="none" stroke="#3271d0" stroke-width="3.5" stroke-linejoin="miter"><path d="M0.8 11.5 L15.7 18.6 L30.8 11.5"/><path d="M0.8 17.4 L15.7 24.5 L30.8 17.4"/></g></svg><div class="t " style="left:537.7px;top:768.0px;font:400 26px/34px 'Liberation Sans', sans-serif;color:#4f5162;transform:scaleX(0.8672);transform-origin:0 0;">1.7.7</div><div class="b" style="left:918px;top:737px;width:144px;height:40px;background:#fbeceb;border-radius:8px;"></div><div class="t " style="left:931.0px;top:741.9px;font:700 22px/29px 'Liberation Sans', sans-serif;color:#b1261e;transform:scaleX(0.8613);transform-origin:0 0;">END OF LIFE</div><div class="b" style="left:1078px;top:736px;width:51px;height:44px;background:#f5f7fb;border-radius:10px;"></div><div class="t " style="left:1091.2px;top:740.0px;font:700 26px/34px 'Liberation Sans', sans-serif;color:#3183d8;transform:scaleX(0.8000);transform-origin:0 0;-webkit-text-stroke:0.6px currentColor;">+1</div><div class="t " style="left:1298.8px;top:740.0px;font:400 26px/34px 'Liberation Sans', sans-serif;color:#0b0b0d;">http---www.apache.org-lice...</div><div class="t " style="left:1679.0px;top:741.3px;font:400 25px/32px 'Liberation Sans', sans-serif;color:#0b0b0d;">maven</div><div class="b" style="left:2059px;top:736px;width:492px;height:44px;background:#f3f4f9;border:2px solid #d8d9e4;border-radius:8px;box-sizing:border-box;"></div><div class="t " style="left:2068.0px;top:743.1px;font:400 26px/34px 'Liberation Mono', monospace;color:#0b0b0d;transform:scaleX(0.9194);transform-origin:0 0;">pkg:maven/org.apache.avro/avro@1…</div><div class="t " style="left:2592.5px;top:740.0px;font:400 26px/34px 'Liberation Sans', sans-serif;color:#0b0b0d;transform:scaleX(0.9727);transform-origin:0 0;-webkit-text-stroke:0.35px currentColor;">The Apache Software Foun...</div><div class="b" style="left:2972px;top:740px;width:6px;height:36px;background:#d5433a;"></div><div class="t " style="left:2994.7px;top:740.3px;font:700 26px/34px 'Liberation Sans', sans-serif;color:#a52a1e;transform:scaleX(0.8632);transform-origin:0 0;">C</div><div class="t " style="left:3018.5px;top:740.3px;font:700 26px/34px 'Liberation Sans', sans-serif;color:#a52a1e;transform:scaleX(0.6714);transform-origin:0 0;">1</div><div class="b" style="left:3045px;top:740px;width:6px;height:36px;background:#e8622e;"></div><div class="t " style="left:3067.6px;top:740.3px;font:700 26px/34px 'Liberation Sans', sans-serif;color:#e8622e;transform:scaleX(0.8053);transform-origin:0 0;">H</div><div class="t " style="left:3090.3px;top:740.3px;font:700 26px/34px 'Liberation Sans', sans-serif;color:#e8622e;transform:scaleX(1.0143);transform-origin:0 0;">0</div><div class="b" style="left:3122px;top:740px;width:6px;height:36px;background:#d9a035;"></div><div class="t " style="left:3144.2px;top:740.3px;font:700 26px/34px 'Liberation Sans', sans-serif;color:#d9a035;transform:scaleX(0.8955);transform-origin:0 0;">M</div><div class="t " style="left:3171.3px;top:740.3px;font:700 26px/34px 'Liberation Sans', sans-serif;color:#d9a035;transform:scaleX(1.0143);transform-origin:0 0;">0</div><div class="b" style="left:3202px;top:740px;width:6px;height:36px;background:#6b6d85;"></div><div class="t " style="left:3225.2px;top:740.3px;font:700 26px/34px 'Liberation Sans', sans-serif;color:#6b6d85;transform:scaleX(0.7562);transform-origin:0 0;">L</div><div class="t " style="left:3244.7px;top:740.3px;font:700 26px/34px 'Liberation Sans', sans-serif;color:#6b6d85;transform:scaleX(0.6714);transform-origin:0 0;">1</div><div class="b" style="left:504px;top:854px;width:2882px;height:160px;background:#ffffff;border-radius:10px;box-shadow:0 1px 3px rgba(96,97,112,0.18), 0 0 1px rgba(40,41,61,0.06);"></div><div class="t " style="left:537.7px;top:887.0px;font:400 26px/34px 'Liberation Sans', sans-serif;color:#0b0b0d;transform:scaleX(1.0000);transform-origin:0 0;-webkit-text-stroke:0.35px currentColor;">bash</div><svg class="b" style="left:610px;top:890px;" width="32" height="28" viewBox="0 0 32 28"><g fill="none" stroke="#3271d0" stroke-width="1.5"><path d="M0.8 8.3 L15.3 0.8 L29.8 8.3 L15.3 16.5 Z" stroke-dasharray="2 2"/><path d="M6.8 12 L0.8 15.3 L15.3 23.3 L29.8 15.3 L23.8 12" stroke-width="1.9"/></g></svg><div class="t " style="left:537.7px;top:944.0px;font:400 26px/34px 'Liberation Sans', sans-serif;color:#4f5162;transform:scaleX(0.9523);transform-origin:0 0;">5.1-6ubuntu1</div><div class="b" style="left:919px;top:933px;width:9px;height:2px;background:#4f5162;"></div><div class="t " style="left:1298.8px;top:916.0px;font:400 26px/34px 'Liberation Sans', sans-serif;color:#0b0b0d;">GPL-3.0-only</div><div class="t " style="left:1679.0px;top:917.3px;font:400 25px/32px 'Liberation Sans', sans-serif;color:#0b0b0d;">deb</div><div class="b" style="left:2059px;top:912px;width:477px;height:44px;background:#f3f4f9;border:2px solid #d8d9e4;border-radius:8px;box-sizing:border-box;"></div><div class="t " style="left:2068.0px;top:919.1px;font:400 26px/34px 'Liberation Mono', monospace;color:#0b0b0d;transform:scaleX(0.9180);transform-origin:0 0;">pkg:deb/ubuntu/bash@5.1-6ubuntu1</div><div class="b" style="left:2972px;top:916px;width:6px;height:36px;background:#d5433a;"></div><div class="t " style="left:2994.7px;top:916.3px;font:700 26px/34px 'Liberation Sans', sans-serif;color:#a52a1e;transform:scaleX(0.8632);transform-origin:0 0;">C</div><div class="t " style="left:3018.5px;top:916.3px;font:700 26px/34px 'Liberation Sans', sans-serif;color:#a52a1e;transform:scaleX(1.0143);transform-origin:0 0;">0</div><div class="b" style="left:3050px;top:916px;width:6px;height:36px;background:#e8622e;"></div><div class="t " style="left:3072.4px;top:916.3px;font:700 26px/34px 'Liberation Sans', sans-serif;color:#e8622e;transform:scaleX(0.8053);transform-origin:0 0;">H</div><div class="t " style="left:3095.1px;top:916.3px;font:700 26px/34px 'Liberation Sans', sans-serif;color:#e8622e;transform:scaleX(0.6714);transform-origin:0 0;">1</div><div class="b" style="left:3122px;top:916px;width:6px;height:36px;background:#d9a035;"></div><div class="t " style="left:3144.2px;top:916.3px;font:700 26px/34px 'Liberation Sans', sans-serif;color:#d9a035;transform:scaleX(0.8955);transform-origin:0 0;">M</div><div class="t " style="left:3171.3px;top:916.3px;font:700 26px/34px 'Liberation Sans', sans-serif;color:#d9a035;transform:scaleX(1.0143);transform-origin:0 0;">0</div><div class="b" style="left:3202px;top:916px;width:6px;height:36px;background:#6b6d85;"></div><div class="t " style="left:3225.2px;top:916.3px;font:700 26px/34px 'Liberation Sans', sans-serif;color:#6b6d85;transform:scaleX(0.7562);transform-origin:0 0;">L</div><div class="t " style="left:3244.7px;top:916.3px;font:700 26px/34px 'Liberation Sans', sans-serif;color:#6b6d85;transform:scaleX(1.0143);transform-origin:0 0;">0</div><div class="b" style="left:504px;top:1030px;width:2882px;height:160px;background:#ffffff;border-radius:10px;box-shadow:0 1px 3px rgba(96,97,112,0.18), 0 0 1px rgba(40,41,61,0.06);"></div><div class="t " style="left:537.7px;top:1063.0px;font:400 26px/34px 'Liberation Sans', sans-serif;color:#0b0b0d;transform:scaleX(1.0100);transform-origin:0 0;-webkit-text-stroke:0.35px currentColor;">commons-beanutils</div><svg class="b" style="left:781px;top:1066px;" width="32" height="28" viewBox="0 0 32 28"><g fill="#3271d0"><path d="M0 8 L15.6 0.8 L31.2 8 L15.6 15.4 Z"/></g>
<g fill="none" stroke="#3271d0" stroke-width="3.5" stroke-linejoin="miter"><path d="M0.8 11.5 L15.7 18.6 L30.8 11.5"/><path d="M0.8 17.4 L15.7 24.5 L30.8 17.4"/></g></svg><div class="t " style="left:537.7px;top:1120.0px;font:400 26px/34px 'Liberation Sans', sans-serif;color:#4f5162;transform:scaleX(0.8672);transform-origin:0 0;">1.8.3</div><svg class="b" style="left:606px;top:1125px;" width="22" height="22" viewBox="0 0 22 22"><g fill="none" stroke="#6b6d85" stroke-width="2.4" stroke-linecap="round" stroke-linejoin="round"><path d="M1.5 11 L20 11 M12 3 L20 11 L12 19"/></g></svg><div class="t " style="left:645.2px;top:1120.0px;font:400 26px/34px 'Liberation Sans', sans-serif;color:#4f5162;transform:scaleX(0.7900);transform-origin:0 0;">1.11.0</div><div class="b" style="left:918px;top:1089px;width:144px;height:40px;background:#fbeceb;border-radius:8px;"></div><div class="t " style="left:931.0px;top:1093.9px;font:700 22px/29px 'Liberation Sans', sans-serif;color:#b1261e;transform:scaleX(0.8613);transform-origin:0 0;">END OF LIFE</div><div class="b" style="left:1078px;top:1088px;width:51px;height:44px;background:#f5f7fb;border-radius:10px;"></div><div class="t " style="left:1091.2px;top:1092.0px;font:700 26px/34px 'Liberation Sans', sans-serif;color:#3183d8;transform:scaleX(0.8000);transform-origin:0 0;-webkit-text-stroke:0.6px currentColor;">+1</div><div class="t " style="left:1298.8px;top:1092.0px;font:400 26px/34px 'Liberation Sans', sans-serif;color:#0b0b0d;">Apache-2.0</div><div class="t " style="left:1679.0px;top:1093.3px;font:400 25px/32px 'Liberation Sans', sans-serif;color:#0b0b0d;">maven</div><div class="b" style="left:2059px;top:1088px;width:492px;height:44px;background:#f3f4f9;border:2px solid #d8d9e4;border-radius:8px;box-sizing:border-box;"></div><div class="t " style="left:2068.0px;top:1095.1px;font:400 26px/34px 'Liberation Mono', monospace;color:#0b0b0d;transform:scaleX(0.9194);transform-origin:0 0;">pkg:maven/commons-beanutils/comm…</div><div class="t " style="left:2592.5px;top:1092.0px;font:400 26px/34px 'Liberation Sans', sans-serif;color:#0b0b0d;transform:scaleX(0.9727);transform-origin:0 0;-webkit-text-stroke:0.35px currentColor;">The Apache Software Foun...</div><div class="b" style="left:2972px;top:1092px;width:6px;height:36px;background:#d5433a;"></div><div class="t " style="left:2994.7px;top:1092.3px;font:700 26px/34px 'Liberation Sans', sans-serif;color:#a52a1e;transform:scaleX(0.8632);transform-origin:0 0;">C</div><div class="t " style="left:3018.5px;top:1092.3px;font:700 26px/34px 'Liberation Sans', sans-serif;color:#a52a1e;transform:scaleX(1.0143);transform-origin:0 0;">0</div><div class="b" style="left:3050px;top:1092px;width:6px;height:36px;background:#e8622e;"></div><div class="t " style="left:3072.4px;top:1092.3px;font:700 26px/34px 'Liberation Sans', sans-serif;color:#e8622e;transform:scaleX(0.8053);transform-origin:0 0;">H</div><div class="t " style="left:3095.1px;top:1092.3px;font:700 26px/34px 'Liberation Sans', sans-serif;color:#e8622e;transform:scaleX(0.9214);transform-origin:0 0;">2</div><div class="b" style="left:3125px;top:1092px;width:6px;height:36px;background:#d9a035;"></div><div class="t " style="left:3147.7px;top:1092.3px;font:700 26px/34px 'Liberation Sans', sans-serif;color:#d9a035;transform:scaleX(0.8955);transform-origin:0 0;">M</div><div class="t " style="left:3174.8px;top:1092.3px;font:700 26px/34px 'Liberation Sans', sans-serif;color:#d9a035;transform:scaleX(1.0143);transform-origin:0 0;">0</div><div class="b" style="left:3206px;top:1092px;width:6px;height:36px;background:#6b6d85;"></div><div class="t " style="left:3228.7px;top:1092.3px;font:700 26px/34px 'Liberation Sans', sans-serif;color:#6b6d85;transform:scaleX(0.7562);transform-origin:0 0;">L</div><div class="t " style="left:3248.2px;top:1092.3px;font:700 26px/34px 'Liberation Sans', sans-serif;color:#6b6d85;transform:scaleX(1.0143);transform-origin:0 0;">0</div><div class="b" style="left:504px;top:1206px;width:2882px;height:160px;background:#ffffff;border-radius:10px;box-shadow:0 1px 3px rgba(96,97,112,0.18), 0 0 1px rgba(40,41,61,0.06);"></div><div class="t " style="left:537.7px;top:1239.0px;font:400 26px/34px 'Liberation Sans', sans-serif;color:#0b0b0d;transform:scaleX(1.0100);transform-origin:0 0;-webkit-text-stroke:0.35px currentColor;">commons-codec</div><svg class="b" style="left:747px;top:1242px;" width="32" height="28" viewBox="0 0 32 28"><g fill="#3271d0"><path d="M0 8 L15.6 0.8 L31.2 8 L15.6 15.4 Z"/></g>
<g fill="none" stroke="#3271d0" stroke-width="3.5" stroke-linejoin="miter"><path d="M0.8 11.5 L15.7 18.6 L30.8 11.5"/><path d="M0.8 17.4 L15.7 24.5 L30.8 17.4"/></g></svg><div class="t " style="left:537.7px;top:1296.0px;font:400 26px/34px 'Liberation Sans', sans-serif;color:#4f5162;transform:scaleX(0.8306);transform-origin:0 0;">1.6</div><svg class="b" style="left:586px;top:1301px;" width="22" height="22" viewBox="0 0 22 22"><g fill="none" stroke="#6b6d85" stroke-width="2.4" stroke-linecap="round" stroke-linejoin="round"><path d="M1.5 11 L20 11 M12 3 L20 11 L12 19"/></g></svg><div class="t " style="left:624.8px;top:1296.0px;font:400 26px/34px 'Liberation Sans', sans-serif;color:#4f5162;transform:scaleX(0.8361);transform-origin:0 0;">1.19.0</div><div class="b" style="left:918px;top:1267px;width:134px;height:40px;background:#fdf6e5;border-radius:8px;"></div><div class="t " style="left:931.0px;top:1270.9px;font:700 22px/29px 'Liberation Sans', sans-serif;color:#d69c2f;transform:scaleX(0.8942);transform-origin:0 0;">OUTDATED</div><div class="t " style="left:1298.8px;top:1268.0px;font:400 26px/34px 'Liberation Sans', sans-serif;color:#0b0b0d;">http---www.apache.org-lice...</div><div class="t " style="left:1679.0px;top:1269.3px;font:400 25px/32px 'Liberation Sans', sans-serif;color:#0b0b0d;">maven</div><div class="b" style="left:2059px;top:1264px;width:492px;height:44px;background:#f3f4f9;border:2px solid #d8d9e4;border-radius:8px;box-sizing:border-box;"></div><div class="t " style="left:2068.0px;top:1271.1px;font:400 26px/34px 'Liberation Mono', monospace;color:#0b0b0d;transform:scaleX(0.9194);transform-origin:0 0;">pkg:maven/commons-codec/commons-…</div><div class="t " style="left:2592.5px;top:1268.0px;font:400 26px/34px 'Liberation Sans', sans-serif;color:#0b0b0d;transform:scaleX(0.9727);transform-origin:0 0;-webkit-text-stroke:0.35px currentColor;">The Apache Software Foun...</div><div class="b" style="left:2972px;top:1268px;width:6px;height:36px;background:#d5433a;"></div><div class="t " style="left:2994.7px;top:1268.3px;font:700 26px/34px 'Liberation Sans', sans-serif;color:#a52a1e;transform:scaleX(0.8632);transform-origin:0 0;">C</div><div class="t " style="left:3018.5px;top:1268.3px;font:700 26px/34px 'Liberation Sans', sans-serif;color:#a52a1e;transform:scaleX(1.0143);transform-origin:0 0;">0</div><div class="b" style="left:3050px;top:1268px;width:6px;height:36px;background:#e8622e;"></div><div class="t " style="left:3072.4px;top:1268.3px;font:700 26px/34px 'Liberation Sans', sans-serif;color:#e8622e;transform:scaleX(0.8053);transform-origin:0 0;">H</div><div class="t " style="left:3095.1px;top:1268.3px;font:700 26px/34px 'Liberation Sans', sans-serif;color:#e8622e;transform:scaleX(1.0143);transform-origin:0 0;">0</div><div class="b" style="left:3126px;top:1268px;width:6px;height:36px;background:#d9a035;"></div><div class="t " style="left:3149.0px;top:1268.3px;font:700 26px/34px 'Liberation Sans', sans-serif;color:#d9a035;transform:scaleX(0.8955);transform-origin:0 0;">M</div><div class="t " style="left:3176.1px;top:1268.3px;font:700 26px/34px 'Liberation Sans', sans-serif;color:#d9a035;transform:scaleX(1.0143);transform-origin:0 0;">0</div><div class="b" style="left:3207px;top:1268px;width:6px;height:36px;background:#6b6d85;"></div><div class="t " style="left:3230.0px;top:1268.3px;font:700 26px/34px 'Liberation Sans', sans-serif;color:#6b6d85;transform:scaleX(0.7562);transform-origin:0 0;">L</div><div class="t " style="left:3249.5px;top:1268.3px;font:700 26px/34px 'Liberation Sans', sans-serif;color:#6b6d85;transform:scaleX(0.6714);transform-origin:0 0;">1</div><div class="b" style="left:504px;top:1382px;width:2882px;height:160px;background:#ffffff;border-radius:10px;box-shadow:0 1px 3px rgba(96,97,112,0.18), 0 0 1px rgba(40,41,61,0.06);"></div><div class="t " style="left:537.7px;top:1415.0px;font:400 26px/34px 'Liberation Sans', sans-serif;color:#0b0b0d;transform:scaleX(1.0100);transform-origin:0 0;-webkit-text-stroke:0.35px currentColor;">commons-collections</div><svg class="b" style="left:799px;top:1418px;" width="32" height="28" viewBox="0 0 32 28"><g fill="#3271d0"><path d="M0 8 L15.6 0.8 L31.2 8 L15.6 15.4 Z"/></g>
<g fill="none" stroke="#3271d0" stroke-width="3.5" stroke-linejoin="miter"><path d="M0.8 11.5 L15.7 18.6 L30.8 11.5"/><path d="M0.8 17.4 L15.7 24.5 L30.8 17.4"/></g></svg><div class="t " style="left:537.7px;top:1472.0px;font:400 26px/34px 'Liberation Sans', sans-serif;color:#4f5162;transform:scaleX(0.8672);transform-origin:0 0;">3.2.1</div><div class="b" style="left:918px;top:1441px;width:144px;height:40px;background:#fbeceb;border-radius:8px;"></div><div class="t " style="left:931.0px;top:1445.9px;font:700 22px/29px 'Liberation Sans', sans-serif;color:#b1261e;transform:scaleX(0.8613);transform-origin:0 0;">END OF LIFE</div><div class="b" style="left:1078px;top:1440px;width:51px;height:44px;background:#f5f7fb;border-radius:10px;"></div><div class="t " style="left:1091.2px;top:1444.0px;font:700 26px/34px 'Liberation Sans', sans-serif;color:#3183d8;transform:scaleX(0.8000);transform-origin:0 0;-webkit-text-stroke:0.6px currentColor;">+1</div><div class="t " style="left:1298.8px;top:1444.0px;font:400 26px/34px 'Liberation Sans', sans-serif;color:#0b0b0d;">Apache-2.0</div><div class="t " style="left:1679.0px;top:1445.3px;font:400 25px/32px 'Liberation Sans', sans-serif;color:#0b0b0d;">maven</div><div class="b" style="left:2059px;top:1440px;width:492px;height:44px;background:#f3f4f9;border:2px solid #d8d9e4;border-radius:8px;box-sizing:border-box;"></div><div class="t " style="left:2068.0px;top:1447.1px;font:400 26px/34px 'Liberation Mono', monospace;color:#0b0b0d;transform:scaleX(0.9194);transform-origin:0 0;">pkg:maven/commons-collections/co…</div><div class="t " style="left:2592.5px;top:1444.0px;font:400 26px/34px 'Liberation Sans', sans-serif;color:#0b0b0d;transform:scaleX(0.9727);transform-origin:0 0;-webkit-text-stroke:0.35px currentColor;">The Apache Software Foun...</div><div class="b" style="left:2972px;top:1444px;width:6px;height:36px;background:#d5433a;"></div><div class="t " style="left:2994.7px;top:1444.3px;font:700 26px/34px 'Liberation Sans', sans-serif;color:#a52a1e;transform:scaleX(0.8632);transform-origin:0 0;">C</div><div class="t " style="left:3018.5px;top:1444.3px;font:700 26px/34px 'Liberation Sans', sans-serif;color:#a52a1e;transform:scaleX(0.9214);transform-origin:0 0;">2</div><div class="b" style="left:3048px;top:1444px;width:6px;height:36px;background:#e8622e;"></div><div class="t " style="left:3071.1px;top:1444.3px;font:700 26px/34px 'Liberation Sans', sans-serif;color:#e8622e;transform:scaleX(0.8053);transform-origin:0 0;">H</div><div class="t " style="left:3093.8px;top:1444.3px;font:700 26px/34px 'Liberation Sans', sans-serif;color:#e8622e;transform:scaleX(1.0143);transform-origin:0 0;">0</div><div class="b" style="left:3125px;top:1444px;width:6px;height:36px;background:#d9a035;"></div><div class="t " style="left:3147.7px;top:1444.3px;font:700 26px/34px 'Liberation Sans', sans-serif;color:#d9a035;transform:scaleX(0.8955);transform-origin:0 0;">M</div><div class="t " style="left:3174.8px;top:1444.3px;font:700 26px/34px 'Liberation Sans', sans-serif;color:#d9a035;transform:scaleX(0.6714);transform-origin:0 0;">1</div><div class="b" style="left:3201px;top:1444px;width:6px;height:36px;background:#6b6d85;"></div><div class="t " style="left:3223.9px;top:1444.3px;font:700 26px/34px 'Liberation Sans', sans-serif;color:#6b6d85;transform:scaleX(0.7562);transform-origin:0 0;">L</div><div class="t " style="left:3243.4px;top:1444.3px;font:700 26px/34px 'Liberation Sans', sans-serif;color:#6b6d85;transform:scaleX(1.0143);transform-origin:0 0;">0</div><div class="b" style="left:504px;top:1558px;width:2882px;height:160px;background:#ffffff;border-radius:10px;box-shadow:0 1px 3px rgba(96,97,112,0.18), 0 0 1px rgba(40,41,61,0.06);"></div><div class="t " style="left:537.7px;top:1591.0px;font:400 26px/34px 'Liberation Sans', sans-serif;color:#0b0b0d;transform:scaleX(1.0100);transform-origin:0 0;-webkit-text-stroke:0.35px currentColor;">commons-compress</div><svg class="b" style="left:790px;top:1594px;" width="32" height="28" viewBox="0 0 32 28"><g fill="#3271d0"><path d="M0 8 L15.6 0.8 L31.2 8 L15.6 15.4 Z"/></g>
<g fill="none" stroke="#3271d0" stroke-width="3.5" stroke-linejoin="miter"><path d="M0.8 11.5 L15.7 18.6 L30.8 11.5"/><path d="M0.8 17.4 L15.7 24.5 L30.8 17.4"/></g></svg><div class="t " style="left:537.7px;top:1648.0px;font:400 26px/34px 'Liberation Sans', sans-serif;color:#4f5162;transform:scaleX(0.7828);transform-origin:0 0;">1.4.1</div><svg class="b" style="left:602px;top:1653px;" width="22" height="22" viewBox="0 0 22 22"><g fill="none" stroke="#6b6d85" stroke-width="2.4" stroke-linecap="round" stroke-linejoin="round"><path d="M1.5 11 L20 11 M12 3 L20 11 L12 19"/></g></svg><div class="t " style="left:640.3px;top:1648.0px;font:400 26px/34px 'Liberation Sans', sans-serif;color:#4f5162;transform:scaleX(0.9042);transform-origin:0 0;">1.28.0</div><div class="b" style="left:918px;top:1617px;width:144px;height:40px;background:#fbeceb;border-radius:8px;"></div><div class="t " style="left:931.0px;top:1621.9px;font:700 22px/29px 'Liberation Sans', sans-serif;color:#b1261e;transform:scaleX(0.8613);transform-origin:0 0;">END OF LIFE</div><div class="b" style="left:1078px;top:1616px;width:51px;height:44px;background:#f5f7fb;border-radius:10px;"></div><div class="t " style="left:1091.2px;top:1620.0px;font:700 26px/34px 'Liberation Sans', sans-serif;color:#3183d8;transform:scaleX(0.8000);transform-origin:0 0;-webkit-text-stroke:0.6px currentColor;">+1</div><div class="t " style="left:1298.8px;top:1620.0px;font:400 26px/34px 'Liberation Sans', sans-serif;color:#0b0b0d;">http---www.apache.org-lice...</div><div class="t " style="left:1679.0px;top:1621.3px;font:400 25px/32px 'Liberation Sans', sans-serif;color:#0b0b0d;">maven</div><div class="b" style="left:2059px;top:1616px;width:492px;height:44px;background:#f3f4f9;border:2px solid #d8d9e4;border-radius:8px;box-sizing:border-box;"></div><div class="t " style="left:2068.0px;top:1623.1px;font:400 26px/34px 'Liberation Mono', monospace;color:#0b0b0d;transform:scaleX(0.9194);transform-origin:0 0;">pkg:maven/org.apache.commons/com…</div><div class="t " style="left:2592.5px;top:1620.0px;font:400 26px/34px 'Liberation Sans', sans-serif;color:#0b0b0d;transform:scaleX(0.9727);transform-origin:0 0;-webkit-text-stroke:0.35px currentColor;">The Apache Software Foun...</div><div class="b" style="left:2972px;top:1620px;width:6px;height:36px;background:#d5433a;"></div><div class="t " style="left:2994.7px;top:1620.3px;font:700 26px/34px 'Liberation Sans', sans-serif;color:#a52a1e;transform:scaleX(0.8632);transform-origin:0 0;">C</div><div class="t " style="left:3018.5px;top:1620.3px;font:700 26px/34px 'Liberation Sans', sans-serif;color:#a52a1e;transform:scaleX(1.0143);transform-origin:0 0;">0</div><div class="b" style="left:3050px;top:1620px;width:6px;height:36px;background:#e8622e;"></div><div class="t " style="left:3072.4px;top:1620.3px;font:700 26px/34px 'Liberation Sans', sans-serif;color:#e8622e;transform:scaleX(0.8053);transform-origin:0 0;">H</div><div class="t " style="left:3095.1px;top:1620.3px;font:700 26px/34px 'Liberation Sans', sans-serif;color:#e8622e;transform:scaleX(0.9214);transform-origin:0 0;">2</div><div class="b" style="left:3125px;top:1620px;width:6px;height:36px;background:#d9a035;"></div><div class="t " style="left:3147.7px;top:1620.3px;font:700 26px/34px 'Liberation Sans', sans-serif;color:#d9a035;transform:scaleX(0.8955);transform-origin:0 0;">M</div><div class="t " style="left:3174.8px;top:1620.3px;font:700 26px/34px 'Liberation Sans', sans-serif;color:#d9a035;transform:scaleX(0.9214);transform-origin:0 0;">2</div><div class="b" style="left:3205px;top:1620px;width:6px;height:36px;background:#6b6d85;"></div><div class="t " style="left:3227.4px;top:1620.3px;font:700 26px/34px 'Liberation Sans', sans-serif;color:#6b6d85;transform:scaleX(0.7562);transform-origin:0 0;">L</div><div class="t " style="left:3246.9px;top:1620.3px;font:700 26px/34px 'Liberation Sans', sans-serif;color:#6b6d85;transform:scaleX(1.0143);transform-origin:0 0;">0</div><div class="b" style="left:504px;top:1734px;width:2882px;height:160px;background:#ffffff;border-radius:10px;box-shadow:0 1px 3px rgba(96,97,112,0.18), 0 0 1px rgba(40,41,61,0.06);"></div><div class="t " style="left:537.7px;top:1767.0px;font:400 26px/34px 'Liberation Sans', sans-serif;color:#0b0b0d;transform:scaleX(1.0100);transform-origin:0 0;-webkit-text-stroke:0.35px currentColor;">commons-configuration</div><svg class="b" style="left:826px;top:1770px;" width="32" height="28" viewBox="0 0 32 28"><g fill="#3271d0"><path d="M0 8 L15.6 0.8 L31.2 8 L15.6 15.4 Z"/></g>
<g fill="none" stroke="#3271d0" stroke-width="3.5" stroke-linejoin="miter"><path d="M0.8 11.5 L15.7 18.6 L30.8 11.5"/><path d="M0.8 17.4 L15.7 24.5 L30.8 17.4"/></g></svg><div class="t " style="left:537.7px;top:1824.0px;font:400 26px/34px 'Liberation Sans', sans-serif;color:#4f5162;transform:scaleX(0.8306);transform-origin:0 0;">1.6</div><div class="b" style="left:918px;top:1795px;width:134px;height:40px;background:#fdf6e5;border-radius:8px;"></div><div class="t " style="left:931.0px;top:1798.9px;font:700 22px/29px 'Liberation Sans', sans-serif;color:#d69c2f;transform:scaleX(0.8942);transform-origin:0 0;">OUTDATED</div><div class="t " style="left:1298.8px;top:1796.0px;font:400 26px/34px 'Liberation Sans', sans-serif;color:#0b0b0d;">http---www.apache.org-lice...</div><div class="t " style="left:1679.0px;top:1797.3px;font:400 25px/32px 'Liberation Sans', sans-serif;color:#0b0b0d;">maven</div><div class="b" style="left:2059px;top:1792px;width:492px;height:44px;background:#f3f4f9;border:2px solid #d8d9e4;border-radius:8px;box-sizing:border-box;"></div><div class="t " style="left:2068.0px;top:1799.1px;font:400 26px/34px 'Liberation Mono', monospace;color:#0b0b0d;transform:scaleX(0.9194);transform-origin:0 0;">pkg:maven/commons-configuration/…</div><div class="t " style="left:2592.5px;top:1796.0px;font:400 26px/34px 'Liberation Sans', sans-serif;color:#0b0b0d;transform:scaleX(0.9727);transform-origin:0 0;-webkit-text-stroke:0.35px currentColor;">The Apache Software Foun...</div><div class="b" style="left:2972px;top:1796px;width:6px;height:36px;background:#d5433a;"></div><div class="t " style="left:2994.7px;top:1796.3px;font:700 26px/34px 'Liberation Sans', sans-serif;color:#a52a1e;transform:scaleX(0.8632);transform-origin:0 0;">C</div><div class="t " style="left:3018.5px;top:1796.3px;font:700 26px/34px 'Liberation Sans', sans-serif;color:#a52a1e;transform:scaleX(1.0143);transform-origin:0 0;">0</div><div class="b" style="left:3050px;top:1796px;width:6px;height:36px;background:#e8622e;"></div><div class="t " style="left:3072.4px;top:1796.3px;font:700 26px/34px 'Liberation Sans', sans-serif;color:#e8622e;transform:scaleX(0.8053);transform-origin:0 0;">H</div><div class="t " style="left:3095.1px;top:1796.3px;font:700 26px/34px 'Liberation Sans', sans-serif;color:#e8622e;transform:scaleX(1.0143);transform-origin:0 0;">0</div><div class="b" style="left:3126px;top:1796px;width:6px;height:36px;background:#d9a035;"></div><div class="t " style="left:3149.0px;top:1796.3px;font:700 26px/34px 'Liberation Sans', sans-serif;color:#d9a035;transform:scaleX(0.8955);transform-origin:0 0;">M</div><div class="t " style="left:3176.1px;top:1796.3px;font:700 26px/34px 'Liberation Sans', sans-serif;color:#d9a035;transform:scaleX(1.0143);transform-origin:0 0;">0</div><div class="b" style="left:3207px;top:1796px;width:6px;height:36px;background:#6b6d85;"></div><div class="t " style="left:3230.0px;top:1796.3px;font:700 26px/34px 'Liberation Sans', sans-serif;color:#6b6d85;transform:scaleX(0.7562);transform-origin:0 0;">L</div><div class="t " style="left:3249.5px;top:1796.3px;font:700 26px/34px 'Liberation Sans', sans-serif;color:#6b6d85;transform:scaleX(1.0143);transform-origin:0 0;">0</div><div class="b" style="left:504px;top:1910px;width:2882px;height:160px;background:#ffffff;border-radius:10px;box-shadow:0 1px 3px rgba(96,97,112,0.18), 0 0 1px rgba(40,41,61,0.06);"></div><div class="t " style="left:537.7px;top:1943.0px;font:400 26px/34px 'Liberation Sans', sans-serif;color:#0b0b0d;transform:scaleX(1.0100);transform-origin:0 0;-webkit-text-stroke:0.35px currentColor;">commons-fileupload</div><svg class="b" style="left:789px;top:1946px;" width="32" height="28" viewBox="0 0 32 28"><g fill="#3271d0"><path d="M0 8 L15.6 0.8 L31.2 8 L15.6 15.4 Z"/></g>
<g fill="none" stroke="#3271d0" stroke-width="3.5" stroke-linejoin="miter"><path d="M0.8 11.5 L15.7 18.6 L30.8 11.5"/><path d="M0.8 17.4 L15.7 24.5 L30.8 17.4"/></g></svg><div class="t " style="left:537.7px;top:2000.0px;font:400 26px/34px 'Liberation Sans', sans-serif;color:#4f5162;transform:scaleX(0.7828);transform-origin:0 0;">1.3.1</div><div class="b" style="left:918px;top:1969px;width:144px;height:40px;background:#fbeceb;border-radius:8px;"></div><div class="t " style="left:931.0px;top:1973.9px;font:700 22px/29px 'Liberation Sans', sans-serif;color:#b1261e;transform:scaleX(0.8613);transform-origin:0 0;">END OF LIFE</div><div class="b" style="left:1078px;top:1968px;width:51px;height:44px;background:#f5f7fb;border-radius:10px;"></div><div class="t " style="left:1091.2px;top:1972.0px;font:700 26px/34px 'Liberation Sans', sans-serif;color:#3183d8;transform:scaleX(0.8000);transform-origin:0 0;-webkit-text-stroke:0.6px currentColor;">+1</div><div class="t " style="left:1298.8px;top:1972.0px;font:400 26px/34px 'Liberation Sans', sans-serif;color:#0b0b0d;">Apache-2.0</div><div class="t " style="left:1679.0px;top:1973.3px;font:400 25px/32px 'Liberation Sans', sans-serif;color:#0b0b0d;">maven</div><div class="b" style="left:2059px;top:1968px;width:492px;height:44px;background:#f3f4f9;border:2px solid #d8d9e4;border-radius:8px;box-sizing:border-box;"></div><div class="t " style="left:2068.0px;top:1975.1px;font:400 26px/34px 'Liberation Mono', monospace;color:#0b0b0d;transform:scaleX(0.9470);transform-origin:0 0;">pkg:maven/commons-fileupload/co…</div><div class="t " style="left:2592.5px;top:1972.0px;font:400 26px/34px 'Liberation Sans', sans-serif;color:#0b0b0d;transform:scaleX(0.9727);transform-origin:0 0;-webkit-text-stroke:0.35px currentColor;">The Apache Software Foun...</div><div class="b" style="left:2972px;top:1972px;width:6px;height:36px;background:#d5433a;"></div><div class="t " style="left:2994.7px;top:1972.3px;font:700 26px/34px 'Liberation Sans', sans-serif;color:#a52a1e;transform:scaleX(0.8632);transform-origin:0 0;">C</div><div class="t " style="left:3018.5px;top:1972.3px;font:700 26px/34px 'Liberation Sans', sans-serif;color:#a52a1e;transform:scaleX(0.6714);transform-origin:0 0;">1</div><div class="b" style="left:3045px;top:1972px;width:6px;height:36px;background:#e8622e;"></div><div class="t " style="left:3067.6px;top:1972.3px;font:700 26px/34px 'Liberation Sans', sans-serif;color:#e8622e;transform:scaleX(0.8053);transform-origin:0 0;">H</div><div class="t " style="left:3090.3px;top:1972.3px;font:700 26px/34px 'Liberation Sans', sans-serif;color:#e8622e;transform:scaleX(1.0143);transform-origin:0 0;">0</div><div class="b" style="left:3122px;top:1972px;width:6px;height:36px;background:#d9a035;"></div><div class="t " style="left:3144.2px;top:1972.3px;font:700 26px/34px 'Liberation Sans', sans-serif;color:#d9a035;transform:scaleX(0.8955);transform-origin:0 0;">M</div><div class="t " style="left:3171.3px;top:1972.3px;font:700 26px/34px 'Liberation Sans', sans-serif;color:#d9a035;transform:scaleX(1.0143);transform-origin:0 0;">0</div><div class="b" style="left:3202px;top:1972px;width:6px;height:36px;background:#6b6d85;"></div><div class="t " style="left:3225.2px;top:1972.3px;font:700 26px/34px 'Liberation Sans', sans-serif;color:#6b6d85;transform:scaleX(0.7562);transform-origin:0 0;">L</div><div class="t " style="left:3244.7px;top:1972.3px;font:700 26px/34px 'Liberation Sans', sans-serif;color:#6b6d85;transform:scaleX(1.0143);transform-origin:0 0;">0</div><div class="b" style="left:3400px;top:0px;width:26px;height:1984px;background:linear-gradient(to right, rgba(40,41,61,0) 0%, rgba(40,41,61,0.07) 100%);"></div><div class="b" style="left:3413px;top:982px;width:13px;height:20px;overflow:hidden;"><div style="width:20px;height:20px;border-radius:50%;background:#ee7b4f;"></div></div><svg class="b" style="left:3134px;top:1776px;" width="196" height="64" viewBox="0 0 196 64"><defs>
<linearGradient id="askb" x1="0" y1="0" x2="1" y2="1"><stop offset="0" stop-color="#e58ab5"/><stop offset="0.45" stop-color="#6a3fd8"/><stop offset="0.75" stop-color="#5a7fdc"/><stop offset="1" stop-color="#62c8e0"/></linearGradient>
<linearGradient id="askt" x1="0" y1="0" x2="1" y2="0"><stop offset="0" stop-color="#d67cb8"/><stop offset="0.5" stop-color="#6a45d8"/><stop offset="1" stop-color="#62b9de"/></linearGradient>
<radialGradient id="bot" cx="0.35" cy="0.25" r="0.9"><stop offset="0" stop-color="#f5d0ff"/><stop offset="0.6" stop-color="#d6a8f8"/><stop offset="1" stop-color="#9466f2"/></radialGradient>
</defs>
<rect x="1.5" y="1.5" width="193" height="60.5" rx="30.25" fill="#ffffff" stroke="url(#askb)" stroke-width="3"/>
<path d="M28 30 L23.5 37 L28.5 37 Z M60 30 L64.5 37 L59.5 37 Z" fill="#b98af5"/>
<line x1="44" y1="13" x2="44" y2="18" stroke="#d9aef8" stroke-width="1.6"/><circle cx="44" cy="13" r="2" fill="#e6bdfc"/>
<circle cx="44" cy="34" r="16" fill="url(#bot)"/>
<circle cx="36.7" cy="31" r="4.2" fill="#5a3fc4"/><circle cx="51.5" cy="31" r="4.2" fill="#5a3fc4"/>
<circle cx="36.7" cy="31" r="1.2" fill="#ffffff"/><circle cx="51.5" cy="31" r="1.2" fill="#ffffff"/>
<path d="M41.5 34 L46.5 34 L44 37 Z" fill="#5a3fc4"/></svg><div class="t" style="left:3205px;top:1788px;font:700 30px/40px 'Liberation Sans',sans-serif;background:linear-gradient(90deg,#d67cb8 0%,#6a45d8 50%,#5b8ae0 80%,#62b9de 100%);-webkit-background-clip:text;background-clip:text;color:transparent;letter-spacing:-0.3px;">Ask AI</div><div class="b" style="left:464px;top:0px;width:26px;height:1984px;background:linear-gradient(to right, rgba(40,41,61,0.05), rgba(40,41,61,0));"></div>
</body></html>
